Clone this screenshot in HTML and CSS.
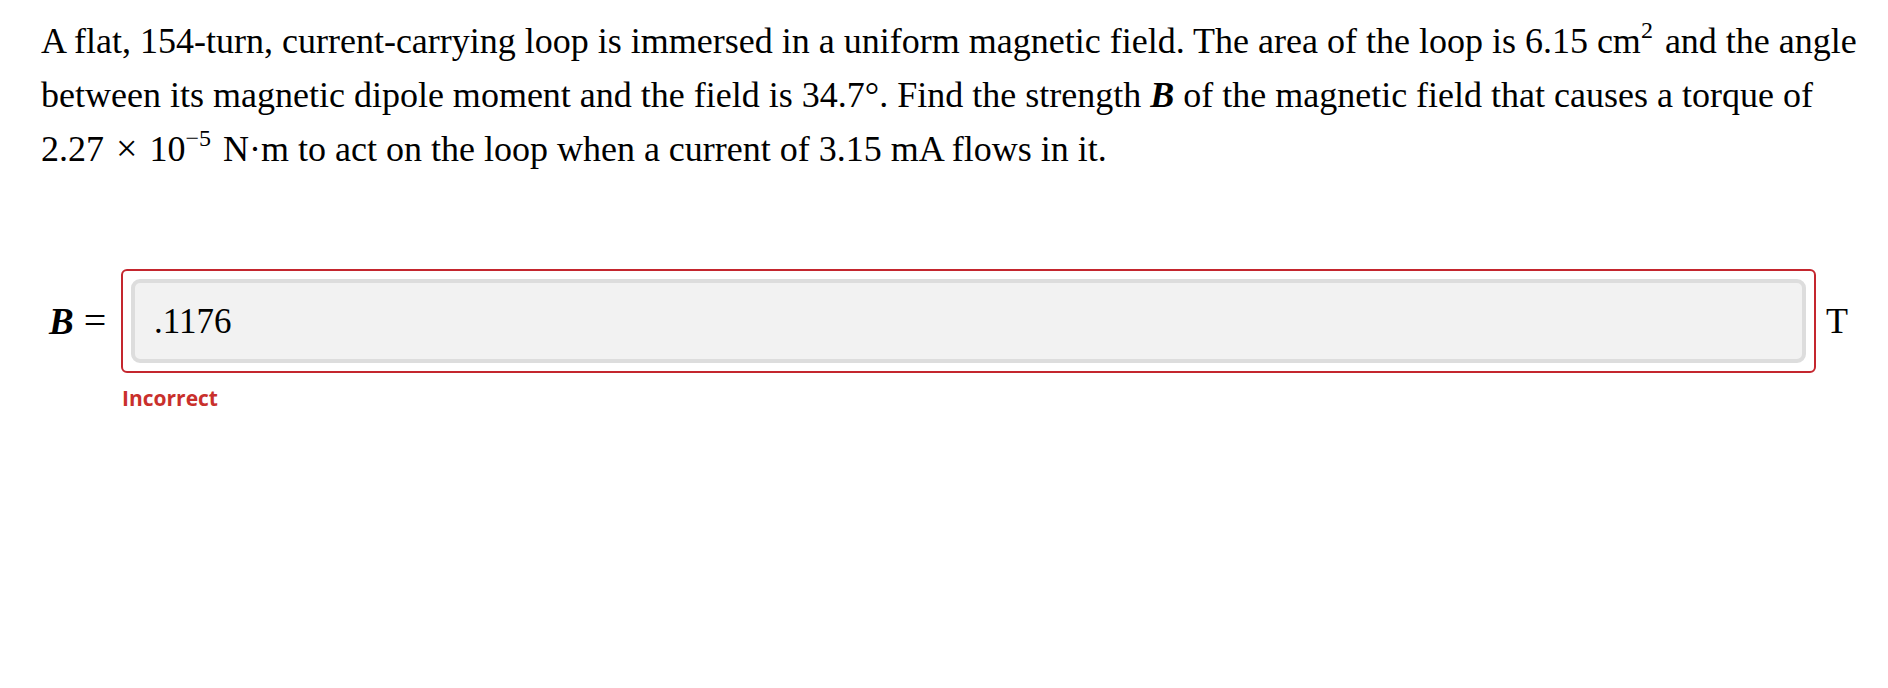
FILE: index.html
```html
<!DOCTYPE html>
<html>
<head>
<meta charset="utf-8">
<link rel="stylesheet" href="styles.css">
</head>
<body>
<div class="page">
  <p class="question">A flat, 154-turn, current-carrying loop is immersed in a uniform magnetic field. The area of the loop is 6.15&nbsp;cm<sup>2</sup> and the angle between its magnetic dipole moment and the field is 34.7°. Find the strength <b><i>B</i></b> of the magnetic field that causes a torque of 2.27<span class="times">×</span>10<sup>−5</sup>&nbsp;N·m to act on the loop when a current of 3.15&nbsp;mA flows in it.</p>
  <div class="answer-row">
    <span class="label"><b><i>B</i></b><span class="eq">=</span></span>
    <div class="field error">
      <div class="input">.1176</div>
    </div>
    <span class="unit">T</span>
  </div>
  <div class="feedback">Incorrect</div>
</div>
</body>
</html>
```
FILE: styles.css
```css
html, body {
  margin: 0;
  padding: 0;
  background: #ffffff;
}
.page {
  padding: 15px 20px 0 41px;
  font-family: "Liberation Serif", "Times New Roman", serif;
  color: #000;
}
.question {
  margin: 0;
  font-size: 36px;
  line-height: 53.5px;
}
.question sup {
  font-size: 24px;
  line-height: 0;
  vertical-align: 0.62em;
  margin-right: 3px;
}
.times {
  font-size: 38px;
  margin: 0 12px;
}
.answer-row {
  margin-top: 92px;
  margin-right: 20px;
  display: flex;
  align-items: center;
}
.label {
  font-size: 37px;
  margin-left: 8px;
  width: 72px;
  white-space: nowrap;
  display: flex;
  align-items: baseline;
}
.eq {
  font-size: 40px;
  margin-left: 10px;
}
.field {
  flex: 1;
  border: 2px solid #c4262e;
  border-radius: 6px;
  padding: 8px;
}
.input {
  background: #f2f2f2;
  border: 4px solid #dddddd;
  border-radius: 9px;
  height: 74px;
  padding-top: 2px;
  box-sizing: content-box;
  padding-left: 19px;
  font-size: 35px;
  line-height: 74px;
}
.unit {
  font-size: 36px;
  margin-left: 10px;
}
.feedback {
  margin-top: 11px;
  margin-left: 81px;
  font-family: "Open Sans", sans-serif;
  font-weight: 700;
  font-size: 21px;
  color: #c9302c;
}
```
